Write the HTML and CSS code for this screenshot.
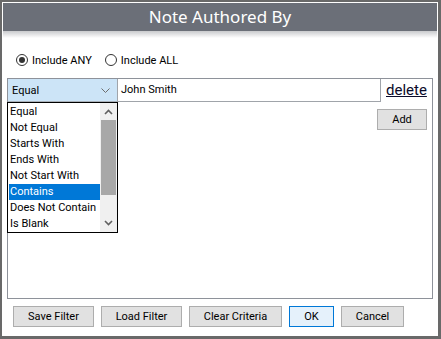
FILE: index.html
```html
<!DOCTYPE html>
<html lang="en">

<head>
    <meta charset="UTF-8">
    <meta name="viewport" content="width=device-width, initial-scale=1.0">
    <title>Note Authored By</title>
    <link rel="stylesheet" href="styles.css">
</head>

<body>
    <div class="dialog">
        <div class="title-bar">Note Authored By</div>
        <div class="title-shade"></div>

        <div class="radio-row">
            <label class="radio-option"><span class="radio checked"></span>Include ANY</label>
            <label class="radio-option"><span class="radio"></span>Include ALL</label>
        </div>

        <div class="criteria-panel">
            <div class="criteria-row">
                <div class="select-box">
                    <span>Equal</span>
                    <svg class="chevron" width="9" height="5" viewBox="0 0 9 5">
                        <path d="M0.5 0.5 L4.5 4.5 L8.5 0.5" fill="none" stroke="#6d6d6d" stroke-width="1"/>
                    </svg>
                </div>
                <div class="text-input">John Smith</div>
                <a class="delete-link" href="#">delete</a>
            </div>
            <div class="add-row">
                <button class="btn add-btn">Add</button>
            </div>

            <!-- open dropdown of the select -->
            <div class="dropdown-list">
                <ul class="options">
                    <li>Equal</li>
                    <li>Not Equal</li>
                    <li>Starts With</li>
                    <li>Ends With</li>
                    <li>Not Start With</li>
                    <li class="selected">Contains</li>
                    <li>Does Not Contain</li>
                    <li>Is Blank</li>
                </ul>
                <div class="scrollbar">
                    <svg class="arrow" width="9" height="6" viewBox="0 0 9 6">
                        <path d="M1 5 L4.5 1.5 L8 5" fill="none" stroke="#606060" stroke-width="1.6"/>
                    </svg>
                    <div class="thumb"></div>
                    <div class="track"></div>
                    <svg class="arrow" width="9" height="6" viewBox="0 0 9 6">
                        <path d="M1 1 L4.5 4.5 L8 1" fill="none" stroke="#606060" stroke-width="1.6"/>
                    </svg>
                </div>
            </div>
        </div>

        <div class="button-row">
            <button class="btn save-btn">Save Filter</button>
            <button class="btn load-btn">Load Filter</button>
            <button class="btn clear-btn">Clear Criteria</button>
            <button class="btn ok-btn">OK</button>
            <button class="btn cancel-btn">Cancel</button>
        </div>
    </div>
</body>

</html>
```

FILE: styles.css
```css
body {
    margin: 0;
    padding: 2px 0 0 2px;
    background-color: #696969;
    font-family: Roboto, 'Noto Sans', sans-serif;
    font-size: 11px;
    color: #000000;
    height: 339px;
    box-sizing: border-box;
    overflow: hidden;
}

.dialog {
    width: 436px;
    height: 334px;
    box-sizing: border-box;
    background-color: #ffffff;
    padding: 1px;
    display: flex;
    flex-direction: column;
}

.title-bar {
    height: 28px;
    background-color: #6b6f78;
    color: #ffffff;
    font-family: 'Noto Sans', sans-serif;
    font-size: 17px;
    line-height: 28px;
    text-align: center;
}

.title-shade {
    height: 7px;
    background: linear-gradient(#c9cacd, #ffffff);
}

.radio-row {
    display: flex;
    align-items: center;
    gap: 13px;
    margin-top: 15px;
    padding-left: 13px;
    height: 14px;
}

.radio-option {
    display: flex;
    align-items: center;
    gap: 4px;
}

.radio {
    width: 12px;
    height: 12px;
    box-sizing: border-box;
    border: 1px solid #333333;
    border-radius: 50%;
    display: flex;
    align-items: center;
    justify-content: center;
}

.radio.checked::after {
    content: "";
    width: 6px;
    height: 6px;
    border-radius: 50%;
    background-color: #333333;
}

.criteria-panel {
    position: relative;
    margin: 11px 0 0 4px;
    width: 426px;
    height: 221px;
    box-sizing: border-box;
    border: 1px solid #8e929a;
}

.criteria-row {
    display: flex;
    align-items: flex-start;
    height: 23px;
}

.select-box {
    width: 109px;
    height: 23px;
    box-sizing: border-box;
    background-color: #cce4f7;
    border-bottom: 1px solid #a9b1b9;
    display: flex;
    align-items: center;
    justify-content: space-between;
    padding: 0 7px 0 4px;
}

.text-input {
    width: 264px;
    height: 23px;
    box-sizing: border-box;
    border: 1px solid #a0a4aa;
    border-top: none;
    padding-left: 3px;
    line-height: 21px;
}

.delete-link {
    margin-left: 5px;
    font-size: 15px;
    line-height: 23px;
    color: #0b0b2a;
}

.add-row {
    display: flex;
    justify-content: flex-end;
    padding: 7px 5px 0 0;
}

.btn {
    font-family: Roboto, 'Noto Sans', sans-serif;
    font-size: 11px;
    color: #000000;
    background-color: #e1e1e1;
    border: 1px solid #adadad;
    height: 21px;
    padding: 0;
}

.add-btn {
    width: 50px;
}

.dropdown-list {
    position: absolute;
    left: -1px;
    top: 23px;
    width: 111px;
    height: 131px;
    box-sizing: border-box;
    border: 1px solid #000000;
    background-color: #ffffff;
    display: flex;
}

.options {
    list-style: none;
    margin: 0;
    padding: 1px 0 0 1px;
    flex: 1;
}

.options li {
    height: 16px;
    line-height: 16px;
    padding-left: 1px;
    white-space: nowrap;
}

.options li.selected {
    background-color: #0078d7;
    color: #ffffff;
}

.scrollbar {
    width: 17px;
    background-color: #f0f0f0;
    display: flex;
    flex-direction: column;
    align-items: center;
}

.scrollbar .arrow {
    margin: 6px 0;
}

.thumb {
    width: 15px;
    height: 75px;
    background-color: #a8a8a8;
    margin-top: -1px;
}

.track {
    flex: 1;
}

.button-row {
    display: flex;
    gap: 7px;
    margin: 7px 0 0 10px;
}

.save-btn,
.load-btn {
    width: 81px;
}

.clear-btn {
    width: 93px;
}

.ok-btn {
    width: 45px;
    background-color: #e5f1fb;
    border-color: #0078d7;
}

.cancel-btn {
    width: 63px;
}
```
